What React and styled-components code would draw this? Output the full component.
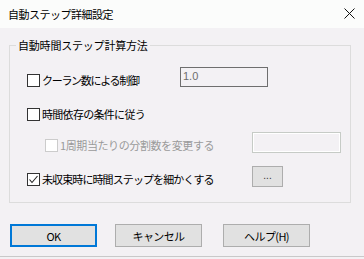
import React from "react";
import styled, { createGlobalStyle } from "styled-components";

const Global = createGlobalStyle`
  html, body { margin: 0; padding: 0; background: #f3f1f4; }
  body {
    font-family: "Noto Sans CJK JP", "Noto Sans", sans-serif;
    font-size: 11px;
    color: #000;
  }
`;

const Window = styled.div`
  width: 364px;
  height: 259px;
  display: flex;
  flex-direction: column;
  background: #f3f1f4;
  overflow: hidden;
`;

const TitleBar = styled.div`
  height: 28px;
  flex: none;
  display: flex;
  align-items: center;
  justify-content: space-between;
  padding: 0 9px 0 8px;
  background: #fbfcfb;
`;

const Title = styled.span`
  font-size: 11px;
  letter-spacing: -0.5px;
  line-height: 14px;
  margin-top: -1px;
`;

const CloseIcon = styled.svg`
  width: 11px;
  height: 11px;
  display: block;
  margin-top: -2px;
`;

const Body = styled.div`
  flex: none;
  display: flex;
  flex-direction: column;
  padding: 17px 0 0 9px;
`;

const Group = styled.div`
  position: relative;
  box-sizing: border-box;
  width: 342px;
  height: 158px;
  border: 1px solid #dcdcdc;
  padding: 21px 0 0 17px;
  display: flex;
  flex-direction: column;
`;

const Legend = styled.span`
  position: absolute;
  left: 6px;
  top: -9px;
  padding: 0 2px;
  background: #f3f1f4;
  line-height: 16px;
  font-size: 11px;
  letter-spacing: -0.2px;
`;

const Row = styled.div`
  display: grid;
  grid-template-columns: ${(p) => p.$col}px auto;
  align-items: end;
  height: ${(p) => p.$h}px;
  margin-top: ${(p) => p.$mt}px;
`;

const Check = styled.label`
  display: flex;
  align-items: center;
  gap: 2px;
  height: 13px;
  margin-left: ${(p) => p.$indent || 0}px;
  margin-bottom: ${(p) => p.$mb || 0}px;
  color: ${(p) => (p.$disabled ? "#9a9a9a" : "#000")};
  white-space: nowrap;
`;

const Box = styled.span`
  box-sizing: border-box;
  width: 13px;
  height: 13px;
  flex: none;
  border: 1px solid ${(p) => (p.$disabled ? "#cccccc" : "#333333")};
  background: #ffffff;
  display: flex;
  align-items: center;
  justify-content: center;
`;

const LabelText = styled.span`
  font-size: 11px;
  line-height: 13px;
  letter-spacing: ${(p) => p.$ls}px;
`;

const TextInput = styled.div`
  box-sizing: border-box;
  width: ${(p) => p.$w}px;
  height: ${(p) => p.$h}px;
  border: 1px solid ${(p) => (p.$disabled ? "#c6cbc6" : "#6e6e6e")};
  box-shadow: ${(p) => (p.$disabled ? "inset 0 0 0 1px #ffffff" : "none")};
  background: #f3f1f4;
  color: #6d6d6d;
  font-family: "Liberation Sans", "Noto Sans", sans-serif;
  font-size: 11px;
  line-height: 17px;
  padding-left: 2px;
`;

const SmallButton = styled.div`
  box-sizing: border-box;
  width: 31px;
  height: 21px;
  border: 1px solid #adadad;
  background: #e1e1e1;
  display: flex;
  align-items: center;
  justify-content: center;
  font-family: "Liberation Sans", sans-serif;
  font-size: 10px;
  color: #333;
  padding-bottom: 3px;
`;

const ButtonRow = styled.div`
  display: flex;
  margin-top: 21px;
  padding-left: 1px;
`;

const Button = styled.div`
  box-sizing: border-box;
  width: 87px;
  height: 23px;
  margin-right: ${(p) => p.$mr || 0}px;
  border: ${(p) => (p.$default ? "2px solid #0078d7" : "1px solid #adadad")};
  background: #e1e1e1;
  display: flex;
  align-items: center;
  justify-content: center;
  font-size: 11px;
  letter-spacing: -0.6px;
  line-height: 14px;
`;

const BottomEdge = styled.div`
  height: 1px;
  flex: none;
  background: #c9c9c9;
  margin-top: 9px;
`;

function CheckMark() {
  return (
    <svg width="11" height="11" viewBox="0 0 11 11">
      <polyline points="1.5,5.5 4,8.5 9.5,2" fill="none" stroke="#222" strokeWidth="1.1" />
    </svg>
  );
}

function CheckBox({ label, checked, disabled, indent, mb, ls }) {
  return (
    <Check $disabled={disabled} $indent={indent} $mb={mb}>
      <Box $disabled={disabled}>{checked && <CheckMark />}</Box>
      <LabelText $ls={ls}>{label}</LabelText>
    </Check>
  );
}

export default function App() {
  return (
    <>
      <Global />
      <Window>
        <TitleBar>
          <Title>自動ステップ詳細設定</Title>
          <CloseIcon viewBox="0 0 11 11">
            <path d="M0.5 0.5 L10.5 10.5 M10.5 0.5 L0.5 10.5" stroke="#111" strokeWidth="1" />
          </CloseIcon>
        </TitleBar>
        <Body>
          <Group>
            <Legend>自動時間ステップ計算方法</Legend>
            <Row $col={153} $h={20} $mt={0}>
              <CheckBox label="クーラン数による制御" ls={-1.3} />
              <TextInput $w={88} $h={20}>1.0</TextInput>
            </Row>
            <Row $col={153} $h={13} $mt={21}>
              <CheckBox label="時間依存の条件に従う" ls={-0.7} />
            </Row>
            <Row $col={225} $h={21} $mt={11}>
              <CheckBox label="1周期当たりの分割数を変更する" disabled indent={18} mb={1} ls={-0.4} />
              <TextInput $w={89} $h={21} $disabled />
            </Row>
            <Row $col={225} $h={21} $mt={13}>
              <CheckBox label="未収束時に時間ステップを細かくする" checked mb={1} ls={-0.9} />
              <SmallButton>...</SmallButton>
            </Row>
          </Group>
          <ButtonRow>
            <Button $default $mr={18}>OK</Button>
            <Button $mr={21}>キャンセル</Button>
            <Button>ヘルプ(H)</Button>
          </ButtonRow>
        </Body>
        <BottomEdge />
      </Window>
    </>
  );
}
